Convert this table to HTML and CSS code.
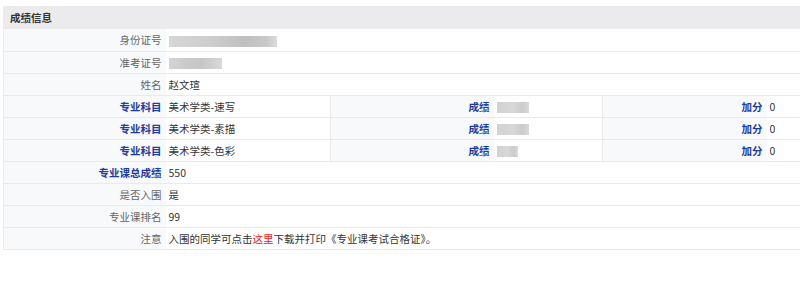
FILE: index.html
```html
<!DOCTYPE html>
<html lang="zh-CN">
<head>
<meta charset="utf-8">
<title>成绩信息</title>
<link rel="stylesheet" href="styles.css">
</head>
<body>
<div class="panel">
  <div class="panel-head">成绩信息</div>
  <table class="info">
    <colgroup>
      <col class="c1"><col class="c2"><col class="c3"><col class="c4"><col class="c5"><col class="c6">
    </colgroup>
    <tr><th>身份证号</th><td colspan="5"><span class="blur blur-id"></span></td></tr>
    <tr><th>准考证号</th><td colspan="5"><span class="blur blur-ticket"></span></td></tr>
    <tr><th>姓名</th><td colspan="5">赵文瑄</td></tr>
    <tr><th class="em">专业科目</th><td>美术学类-速写</td><th class="em sep">成绩</th><td><span class="blur blur-score"></span></td><th class="em sep">加分</th><td>0</td></tr>
    <tr><th class="em">专业科目</th><td>美术学类-素描</td><th class="em sep">成绩</th><td><span class="blur blur-score"></span></td><th class="em sep">加分</th><td>0</td></tr>
    <tr><th class="em">专业科目</th><td>美术学类-色彩</td><th class="em sep">成绩</th><td><span class="blur blur-score short"></span></td><th class="em sep">加分</th><td>0</td></tr>
    <tr><th class="em">专业课总成绩</th><td colspan="5">550</td></tr>
    <tr><th>是否入围</th><td colspan="5">是</td></tr>
    <tr><th>专业课排名</th><td colspan="5">99</td></tr>
    <tr><th>注意</th><td colspan="5">入围的同学可点击<a class="here">这里</a>下载并打印《专业课考试合格证》。</td></tr>
  </table>
</div>
</body>
</html>
```

FILE: styles.css
```css
html, body {
  margin: 0;
  padding: 0;
  background: #fff;
}
body {
  font-family: "Noto Sans CJK SC", "Microsoft YaHei", sans-serif;
  font-size: 10.5px;
  color: #333;
}
.panel {
  padding-top: 6px;
  margin-left: 3px;
  width: 800px;
}
.panel-head {
  height: 23px;
  line-height: 23px;
  background: #ebebed;
  padding-left: 7px;
  font-weight: bold;
  color: #333;
}
.info {
  border-collapse: collapse;
  table-layout: fixed;
  width: 800px;
  border-left: 1px solid #eceef0;
}
.c1 { width: 162px; }
.c2 { width: 165px; }
.c3 { width: 163px; }
.c4 { width: 109px; }
.c5 { width: 164px; }
.c6 { width: 37px; }
.info tr {
  height: 22px;
}
.info th,
.info td {
  border-bottom: 1px solid #e9eaec;
  padding: 0;
  height: 21px;
  line-height: 21px;
  white-space: nowrap;
  overflow: hidden;
}
.info th {
  text-align: right;
  font-weight: normal;
  color: #666;
  background: #f7f9fb;
  padding-right: 4px;
}
.info th.em {
  color: #1f3c9e;
  font-weight: bold;
}
.info th.sep {
  border-left: 1px solid #e6e8ea;
}
.info td {
  text-align: left;
  padding-left: 3px;
  color: #333;
}
.here {
  color: #e31a1a;
}
.blur {
  display: inline-block;
  vertical-align: middle;
  height: 11px;
  background: linear-gradient(90deg, #d4d4d4 0%, #cbcbcb 30%, #c6c6c6 60%, #d8d8d8 100%);
}
.blur-id {
  width: 108px;
  background: linear-gradient(90deg, #d6d6d6 0%, #cdcdcd 40%, #bfbfbf 70%, #c8c8c8 90%, #dcdcdc 100%);
}
.blur-ticket {
  width: 53px;
}
.blur-score {
  width: 32px;
  background: linear-gradient(90deg, #d2d2d2 0%, #d8d8d8 50%, #cbcbcb 80%, #dadada 100%);
}
.blur-score.short {
  width: 21px;
}
```
